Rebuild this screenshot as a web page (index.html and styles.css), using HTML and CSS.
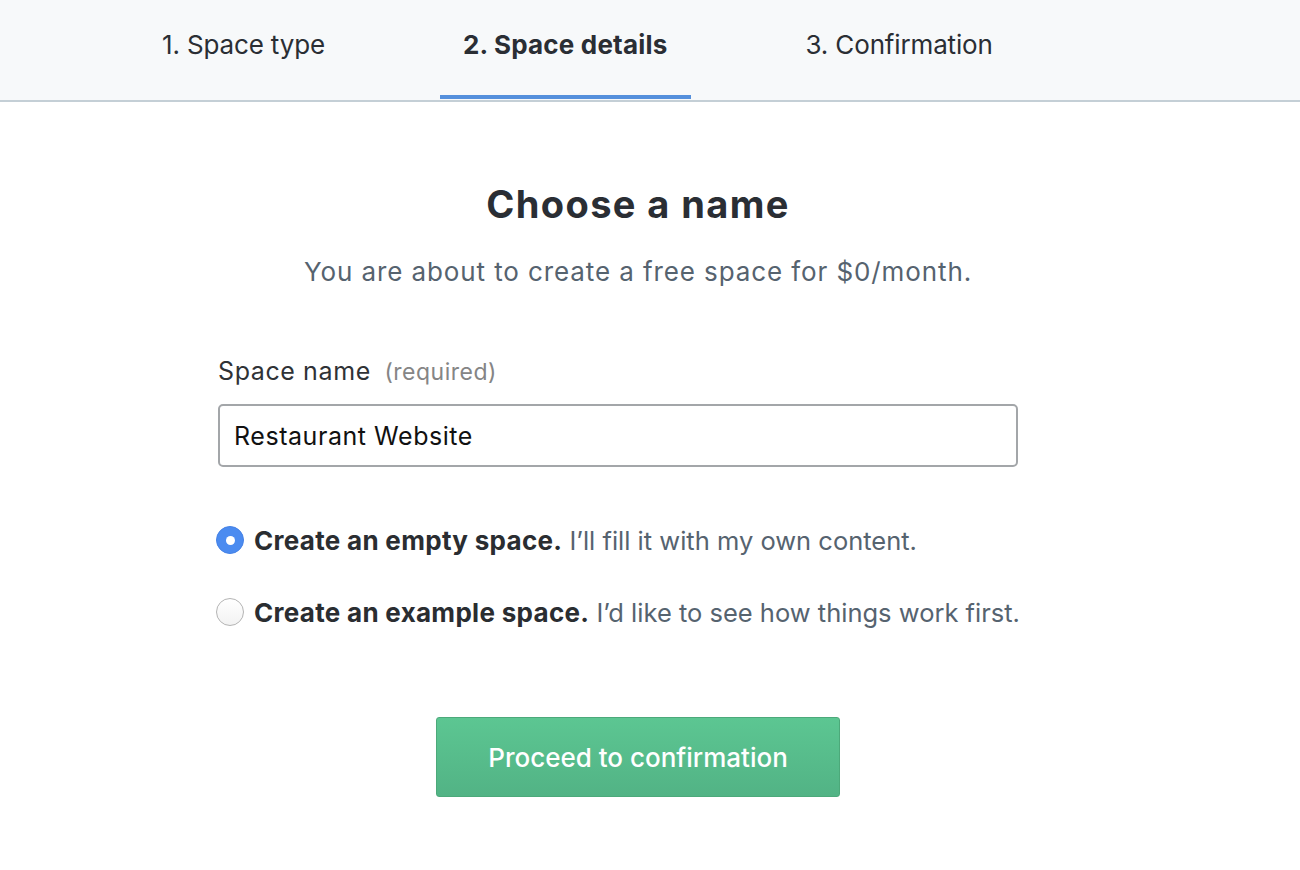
FILE: index.html
```html
<!DOCTYPE html>
<html>
<head>
<meta charset="utf-8">
<link rel="stylesheet" href="styles.css">
</head>
<body>
<header class="steps">
  <div class="step">1. Space type</div>
  <div class="step active">2. Space details</div>
  <div class="step">3. Confirmation</div>
</header>
<main class="main">
  <h1 class="title">Choose a name</h1>
  <p class="subtitle">You are about to create a free space for $0/month.</p>
  <form class="form">
    <label class="label">Space name <span class="req">(required)</span></label>
    <div class="input">Restaurant Website</div>
    <div class="options">
      <div class="option">
        <span class="radio checked"></span>
        <span class="opt-text"><b>Create an empty space.</b> I’ll fill it with my own content.</span>
      </div>
      <div class="option">
        <span class="radio"></span>
        <span class="opt-text"><b>Create an example space.</b> I’d like to see how things work first.</span>
      </div>
    </div>
  </form>
  <div class="actions">
    <button class="btn" type="button">Proceed to confirmation</button>
  </div>
</main>
</body>
</html>
```
FILE: styles.css
```css
* { box-sizing: border-box; }
html, body { margin: 0; padding: 0; }
body {
  font-family: Inter, "Noto Sans", sans-serif;
  background: #fff;
  color: #2a2e34;
  width: 1300px;
}
.steps {
  display: flex;
  gap: 92px;
  padding-left: 139px;
  height: 102px;
  background: #f7f9fa;
  border-bottom: 2px solid #c4cfd6;
  align-items: stretch;
}
.step {
  padding: 32px 23px 0;
  font-size: 26px;
  line-height: 1;
  letter-spacing: -0.15px;
  color: #2a2e34;
  display: flex;
  align-items: flex-start;
  border-bottom: 4px solid transparent;
  margin-bottom: 1px;
}
.step.active {
  font-weight: 700;
  letter-spacing: 0.2px;
  border-bottom-color: #5590dc;
}
.main {
  padding-right: 24px;
  display: flex;
  flex-direction: column;
  align-items: center;
}
.title {
  margin: 80px 0 0;
  font-size: 38px;
  font-weight: 700;
  line-height: 44px;
  letter-spacing: 1.4px;
  color: #2a2e34;
}
.subtitle {
  margin: 30px 0 0;
  font-size: 26px;
  line-height: 32px;
  letter-spacing: 0.9px;
  color: #56636f;
}
.form {
  width: 840px;
  padding-right: 40px;
  margin-top: 67px;
}
.label {
  display: block;
  font-size: 25px;
  line-height: 32px;
  letter-spacing: 0.6px;
  color: #2f3236;
}
.req {
  font-size: 23px;
  letter-spacing: 0.5px;
  color: #858585;
  margin-left: 6px;
}
.input {
  margin-top: 16px;
  height: 63px;
  border: 2px solid #a3a6a9;
  border-radius: 5px;
  padding: 0 14px;
  display: flex;
  align-items: center;
  font-size: 25px;
  letter-spacing: 0.55px;
  color: #111;
}
.options {
  margin-top: 57px;
  display: flex;
  flex-direction: column;
  gap: 40px;
}
.option {
  display: flex;
  align-items: center;
  gap: 10px;
  margin-left: -2px;
  height: 32px;
  white-space: nowrap;
}
.radio {
  width: 28px;
  height: 28px;
  border-radius: 50%;
  border: 1px solid #b4b4b4;
  background: linear-gradient(#fff, #f2f2f2);
  flex: none;
  position: relative;
}
.radio.checked {
  background: #4b8bf0;
  border-color: #4582e6;
}
.radio.checked::after {
  content: "";
  position: absolute;
  left: 50%;
  top: 50%;
  width: 9px;
  height: 9px;
  margin: -4.5px 0 0 -4.5px;
  border-radius: 50%;
  background: #fff;
}
.opt-text {
  font-size: 25.5px;
  color: #56636f;
}
.opt-text b {
  color: #2a2d31;
  font-weight: 700;
  font-size: 26px;
  letter-spacing: 0.3px;
}
.actions {
  margin-top: 89px;
}
.btn {
  width: 404px;
  height: 80px;
  border: 1px solid #4ca97a;
  border-radius: 3px;
  background: linear-gradient(#5cc692, #52b385);
  color: #fff;
  font-family: Inter, "Noto Sans", sans-serif;
  font-size: 26px;
  font-weight: 500;
  cursor: pointer;
}
```
